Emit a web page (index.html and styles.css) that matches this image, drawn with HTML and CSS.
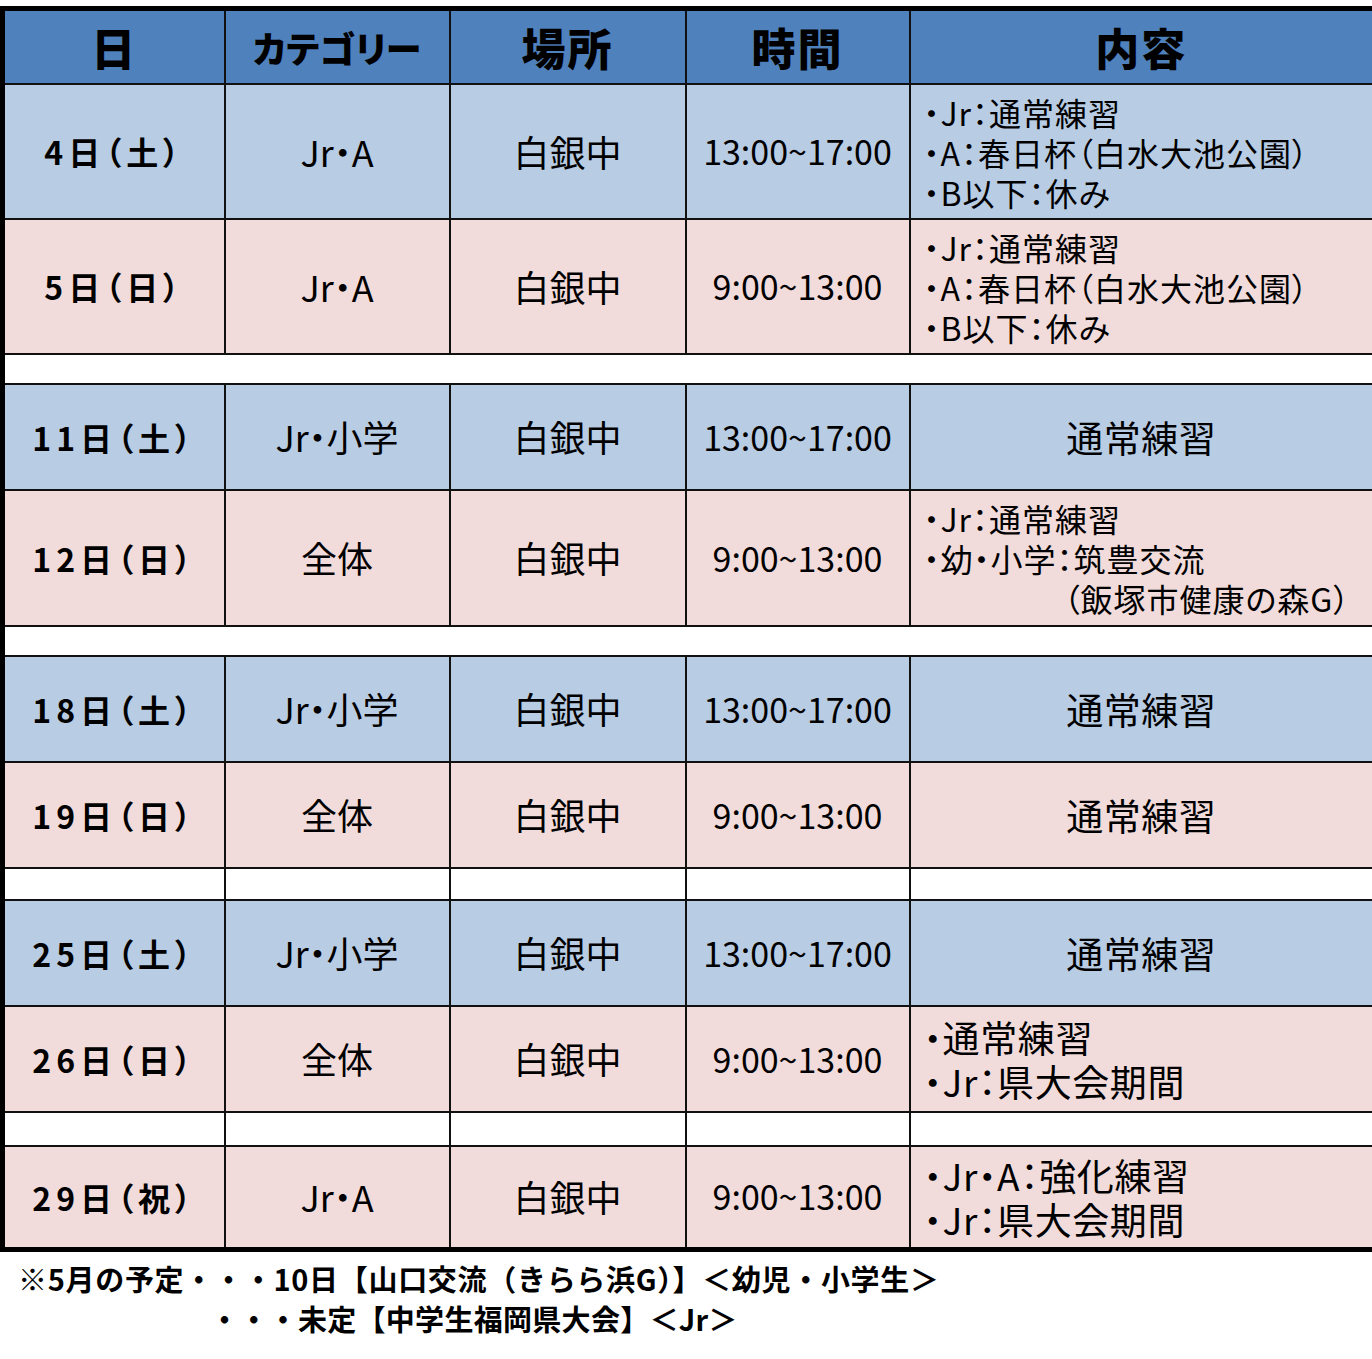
FILE: index.html
```html
<!DOCTYPE html>
<html lang="ja">
<head>
<meta charset="utf-8">
<title>予定表</title>
<link rel="stylesheet" href="styles.css">
</head>
<body>
<table class="sched">
  <colgroup>
    <col class="c1"><col class="c2"><col class="c3"><col class="c4"><col class="c5">
  </colgroup>
  <thead>
    <tr class="head">
      <th>日</th><th class="cat">カテゴリー</th><th>場所</th><th>時間</th><th>内容</th>
    </tr>
  </thead>
  <tbody>
    <tr class="blue tall">
      <td class="date">4日（土）</td><td>Jr・A</td><td>白銀中</td><td class="time">13:00~17:00</td>
      <td class="note"><div>・Jr：通常練習</div><div>・A：春日杯（白水大池公園）</div><div>・B以下：休み</div></td>
    </tr>
    <tr class="pink tall">
      <td class="date">5日（日）</td><td>Jr・A</td><td>白銀中</td><td class="time">9:00~13:00</td>
      <td class="note"><div>・Jr：通常練習</div><div>・A：春日杯（白水大池公園）</div><div>・B以下：休み</div></td>
    </tr>
    <tr class="gap g1"><td colspan="5"></td></tr>
    <tr class="blue mid">
      <td class="date">11日（土）</td><td>Jr・小学</td><td>白銀中</td><td class="time">13:00~17:00</td>
      <td class="single">通常練習</td>
    </tr>
    <tr class="pink tall2">
      <td class="date">12日（日）</td><td>全体</td><td>白銀中</td><td class="time">9:00~13:00</td>
      <td class="note"><div>・Jr：通常練習</div><div>・幼・小学：筑豊交流</div><div class="indent">（飯塚市健康の森G）</div></td>
    </tr>
    <tr class="gap g1"><td colspan="5"></td></tr>
    <tr class="blue mid">
      <td class="date">18日（土）</td><td>Jr・小学</td><td>白銀中</td><td class="time">13:00~17:00</td>
      <td class="single">通常練習</td>
    </tr>
    <tr class="pink mid">
      <td class="date">19日（日）</td><td>全体</td><td>白銀中</td><td class="time">9:00~13:00</td>
      <td class="single">通常練習</td>
    </tr>
    <tr class="gap g2"><td></td><td></td><td></td><td></td><td></td></tr>
    <tr class="blue mid">
      <td class="date">25日（土）</td><td>Jr・小学</td><td>白銀中</td><td class="time">13:00~17:00</td>
      <td class="single">通常練習</td>
    </tr>
    <tr class="pink mid">
      <td class="date">26日（日）</td><td>全体</td><td>白銀中</td><td class="time">9:00~13:00</td>
      <td class="note big"><div>・通常練習</div><div>・Jr：県大会期間</div></td>
    </tr>
    <tr class="gap g3"><td></td><td></td><td></td><td></td><td></td></tr>
    <tr class="pink last">
      <td class="date">29日（祝）</td><td>Jr・A</td><td>白銀中</td><td class="time">9:00~13:00</td>
      <td class="note big"><div>・Jr・A：強化練習</div><div>・Jr：県大会期間</div></td>
    </tr>
  </tbody>
</table>
<div class="footnote">
  <p class="fn1">※5月の予定・・・10日【山口交流（きらら浜G）】＜幼児・小学生＞</p>
  <p class="fn2">・・・未定【中学生福岡県大会】＜Jr＞</p>
</div>
</body>
</html>
```

FILE: styles.css
```css
html, body {
  margin: 0;
  padding: 0;
  background: #ffffff;
}

body {
  font-family: "Noto Sans CJK JP", "Noto Sans", sans-serif;
  color: #000;
  padding-top: 6px;
}

.sched {
  border-collapse: collapse;
  table-layout: fixed;
  width: 1372px;
  border: 5px solid #000;
}

.c1 { width: 222px; }
.c2 { width: 225px; }
.c3 { width: 236px; }
.c4 { width: 224px; }
.c5 { width: 465px; }

.sched th,
.sched td {
  border: 2px solid #111;
  padding: 0;
  text-align: center;
  vertical-align: middle;
  font-feature-settings: "palt";
}

.head th {
  background: #4f81bd;
  height: 72px;
  font-size: 44px;
  font-weight: 900;
  line-height: 1;
  letter-spacing: 2px;
}

.head th.cat {
  font-size: 36px;
  letter-spacing: 0;
}

.blue td { background: #b8cce4; }
.pink td { background: #f2dcdb; }
.gap td { background: #ffffff; }

.tall { height: 135px; }
.tall2 { height: 136px; }
.mid { height: 106px; }
.last { height: 103px; }
.g1 { height: 30px; }
.g2 { height: 32px; }
.g3 { height: 34px; }

.sched td {
  font-size: 36px;
  line-height: 1.2;
}

.sched td.date {
  font-weight: 700;
  font-size: 32px;
  letter-spacing: 5px;
}

.sched td.time {
  font-size: 34px;
  letter-spacing: 0;
}

.sched td.note {
  text-align: left;
  font-size: 32px;
  line-height: 40px;
  letter-spacing: 1px;
  padding-left: 13px;
}

.sched td.note.big {
  font-size: 37px;
  line-height: 44px;
  letter-spacing: 0.6px;
}

.sched td.single {
  font-size: 37px;
  letter-spacing: 0.5px;
}

.note .indent {
  padding-left: 140px;
}

.footnote {
  font-weight: 700;
  font-size: 29px;
  line-height: 40px;
  padding-top: 6px;
}

.footnote p {
  margin: 0;
}

.fn1 { padding-left: 18px; letter-spacing: 0.7px; }
.fn2 { padding-left: 210px; letter-spacing: 0.3px; }
```
